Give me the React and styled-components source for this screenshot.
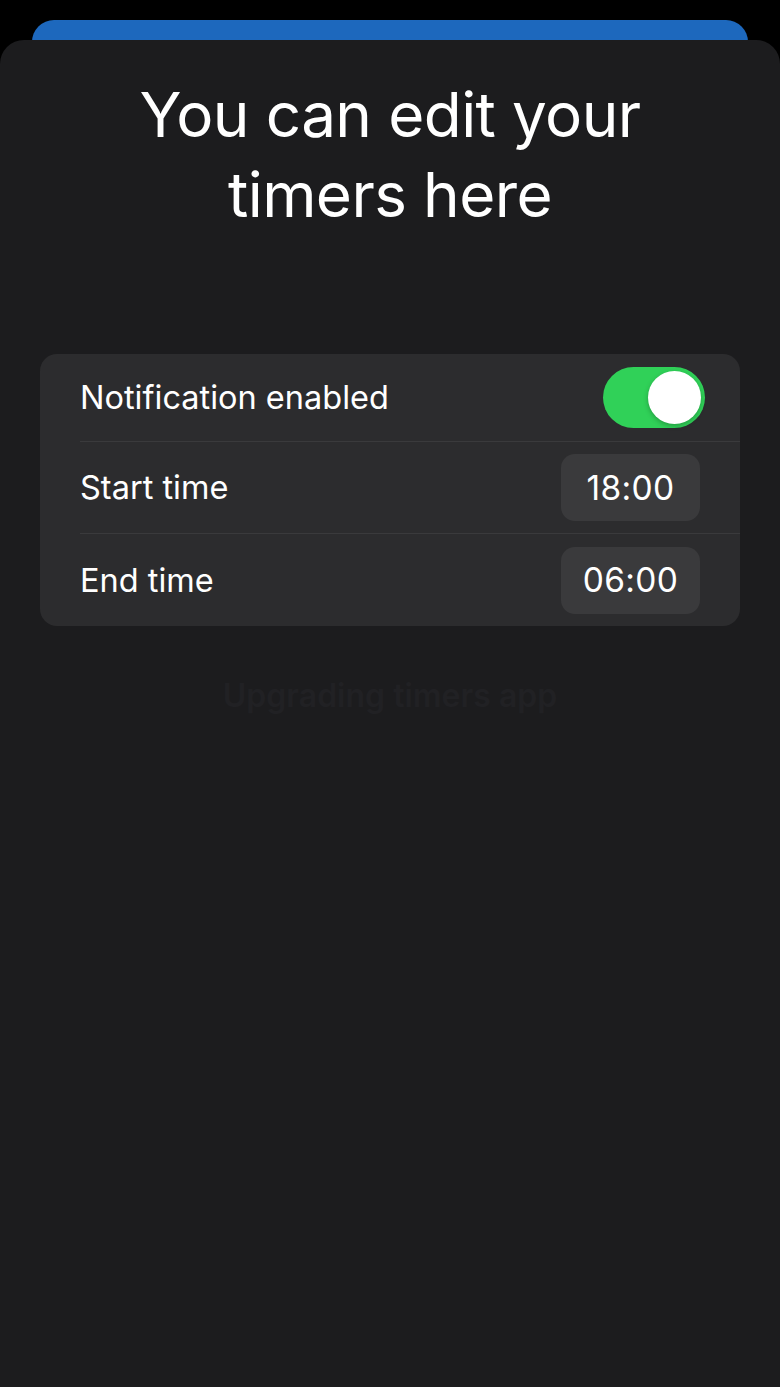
import React, { useState } from "react";
import styled, { createGlobalStyle } from "styled-components";

const GlobalStyle = createGlobalStyle`
  html, body {
    margin: 0;
    padding: 0;
    background: #000000;
    height: 100%;
  }
  #root {
    min-height: 100%;
  }
  * {
    box-sizing: border-box;
  }
`;

const Screen = styled.div`
  position: relative;
  width: 780px;
  height: 1387px;
  overflow: hidden;
  background: #000000;
  padding-top: 20px;
  font-family: Inter, "Noto Sans", "Liberation Sans", sans-serif;
`;

/* the card peeking out behind the sheet */
const BackCard = styled.div`
  margin: 0 32px;
  height: 40px;
  background: #1d68bd;
  border-radius: 22px 22px 0 0;
`;

const Sheet = styled.div`
  margin-top: -20px;
  height: 1347px;
  background: #1c1c1e;
  border-radius: 24px 24px 0 0;
  padding: 35px 40px 0;
  display: flex;
  flex-direction: column;
  align-items: center;
`;

const Title = styled.h1`
  margin: 0;
  color: #ffffff;
  font-size: 62px;
  font-weight: 400;
  line-height: 80px;
  letter-spacing: -0.6px;
  text-align: center;
`;

const Card = styled.div`
  margin-top: 119px;
  width: 100%;
  background: #2c2c2e;
  border-radius: 17px;
  padding-left: 40px;
  display: flex;
  flex-direction: column;
`;

const Row = styled.div`
  display: flex;
  align-items: center;
  justify-content: space-between;
  height: ${(p) => p.$h}px;
  padding-right: ${(p) => p.$pr}px;
  border-top: ${(p) => (p.$divider ? "1px solid #3a3a3c" : "none")};
`;

const Label = styled.span`
  color: #ffffff;
  font-size: 32.5px;
  font-weight: 400;
  letter-spacing: 0;
`;

const Track = styled.button`
  position: relative;
  width: 102px;
  height: 61px;
  border: none;
  padding: 0;
  border-radius: 31px;
  background: ${(p) => (p.$on ? "#30d158" : "#39393d")};
  cursor: pointer;
`;

const Knob = styled.span`
  position: absolute;
  top: 4px;
  left: ${(p) => (p.$on ? "45px" : "4px")};
  width: 53px;
  height: 53px;
  border-radius: 50%;
  background: #ffffff;
  box-shadow: 0 2px 5px rgba(0, 0, 0, 0.25);
`;

const TimePill = styled.div`
  width: 139px;
  height: 67px;
  border-radius: 14px;
  background: #3a3a3c;
  color: #ffffff;
  font-size: 33.5px;
  display: flex;
  align-items: center;
  justify-content: center;
  letter-spacing: 0.3px;
`;

const Ghost = styled.div`
  margin-top: 50px;
  color: #212124;
  font-size: 32px;
  font-weight: 600;
  text-align: center;
`;

export default function App() {
  const [enabled, setEnabled] = useState(true);

  return (
    <>
      <GlobalStyle />
      <Screen>
        <BackCard />
        <Sheet>
          <Title>
            You can edit your
            <br />
            timers here
          </Title>

          <Card>
            <Row $h={87} $pr={35}>
              <Label>Notification enabled</Label>
              <Track $on={enabled} onClick={() => setEnabled(!enabled)} aria-label="Notification enabled">
                <Knob $on={enabled} />
              </Track>
            </Row>
            <Row $h={92} $pr={40} $divider>
              <Label>Start time</Label>
              <TimePill>18:00</TimePill>
            </Row>
            <Row $h={93} $pr={40} $divider>
              <Label>End time</Label>
              <TimePill>06:00</TimePill>
            </Row>
          </Card>

          <Ghost>Upgrading timers app</Ghost>
        </Sheet>
      </Screen>
    </>
  );
}
